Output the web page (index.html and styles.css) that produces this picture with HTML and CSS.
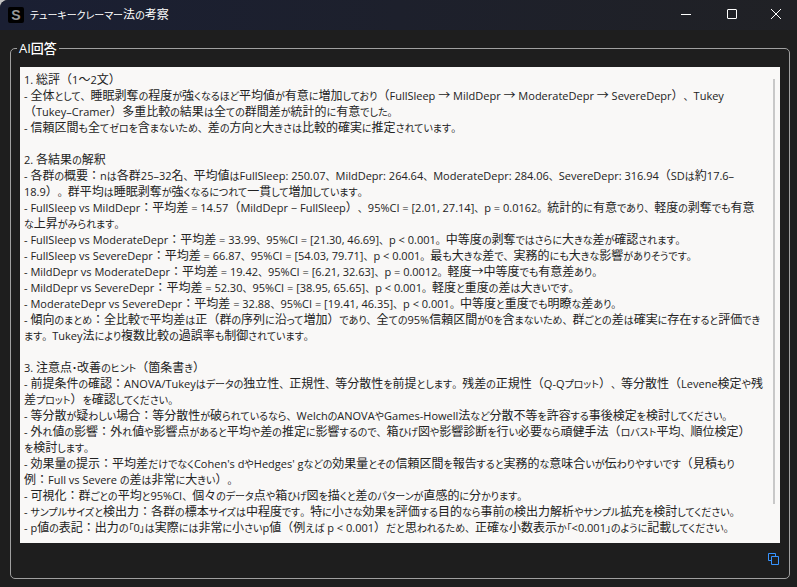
FILE: index.html
```html
<!DOCTYPE html>
<html lang="ja">
<head>
<meta charset="utf-8">
<title>テューキークレーマー法の考察</title>
<link rel="stylesheet" href="styles.css">
<script src="typeset.js" defer></script>
</head>
<body>
<header class="titlebar">
  <span class="app-icon">S</span>
  <h1 class="title" data-typeset>テューキークレーマー法の考察</h1>
  <button class="win-btn" type="button" aria-label="最小化"><svg width="12" height="12" viewBox="0 0 12 12"><path d="M1 6.5h10"/></svg></button>
  <button class="win-btn" type="button" aria-label="最大化"><svg width="12" height="12" viewBox="0 0 12 12"><rect x="1.5" y="1.5" width="9" height="9" rx="0.5"/></svg></button>
  <button class="win-btn" type="button" aria-label="閉じる"><svg width="12" height="12" viewBox="0 0 12 12"><path d="M1 1l10 10M11 1L1 11"/></svg></button>
</header>
<main class="content">
  <fieldset class="group">
    <legend class="group-title"><label for="answer">AI回答</label></legend>
    <div class="answer-box">
      <output class="answer" id="answer" data-typeset>1. 総評（1～2文）
- 全体として、睡眠剥奪の程度が強くなるほど平均値が有意に増加しており（FullSleep → MildDepr → ModerateDepr → SevereDepr）、Tukey
（Tukey–Cramer）多重比較の結果は全ての群間差が統計的に有意でした。
- 信頼区間も全てゼロを含まないため、差の方向と大きさは比較的確実に推定されています。

2. 各結果の解釈
- 各群の概要：nは各群25–32名、平均値はFullSleep: 250.07、MildDepr: 264.64、ModerateDepr: 284.06、SevereDepr: 316.94（SDは約17.6–
18.9）。群平均は睡眠剥奪が強くなるにつれて一貫して増加しています。
- FullSleep vs MildDepr：平均差 = 14.57（MildDepr − FullSleep）、95%CI = [2.01, 27.14]、p = 0.0162。統計的に有意であり、軽度の剥奪でも有意
な上昇がみられます。
- FullSleep vs ModerateDepr：平均差 = 33.99、95%CI = [21.30, 46.69]、p &lt; 0.001。中等度の剥奪ではさらに大きな差が確認されます。
- FullSleep vs SevereDepr：平均差 = 66.87、95%CI = [54.03, 79.71]、p &lt; 0.001。最も大きな差で、実務的にも大きな影響がありそうです。
- MildDepr vs ModerateDepr：平均差 = 19.42、95%CI = [6.21, 32.63]、p = 0.0012。軽度→中等度でも有意差あり。
- MildDepr vs SevereDepr：平均差 = 52.30、95%CI = [38.95, 65.65]、p &lt; 0.001。軽度と重度の差は大きいです。
- ModerateDepr vs SevereDepr：平均差 = 32.88、95%CI = [19.41, 46.35]、p &lt; 0.001。中等度と重度でも明瞭な差あり。
- 傾向のまとめ：全比較で平均差は正（群の序列に沿って増加）であり、全ての95%信頼区間が0を含まないため、群ごとの差は確実に存在すると評価でき
ます。Tukey法により複数比較の過誤率も制御されています。

3. 注意点・改善のヒント（箇条書き）
- 前提条件の確認：ANOVA/Tukeyはデータの独立性、正規性、等分散性を前提とします。残差の正規性（Q-Qプロット）、等分散性（Levene検定や残
差プロット）を確認してください。
- 等分散が疑わしい場合：等分散性が破られているなら、WelchのANOVAやGames-Howell法など分散不等を許容する事後検定を検討してください。
- 外れ値の影響：外れ値や影響点があると平均や差の推定に影響するので、箱ひげ図や影響診断を行い必要なら頑健手法（ロバスト平均、順位検定）
を検討します。
- 効果量の提示：平均差だけでなくCohen's dやHedges' gなどの効果量とその信頼区間を報告すると実務的な意味合いが伝わりやすいです（見積もり
例：Full vs Severe の差は非常に大きい）。
- 可視化：群ごとの平均と95%CI、個々のデータ点や箱ひげ図を描くと差のパターンが直感的に分かります。
- サンプルサイズと検出力：各群の標本サイズは中程度です。特に小さな効果を評価する目的なら事前の検出力解析やサンプル拡充を検討してください。
- p値の表記：出力の「0」は実際には非常に小さいp値（例えば p &lt; 0.001）だと思われるため、正確な小数表示か「&lt;0.001」のように記載してください。</output>
      <span class="scroll-thumb"></span>
    </div>
    <div class="actions">
      <button class="copy-btn" type="button" aria-label="コピー"><svg width="11" height="12" viewBox="0 0 11 12"><path d="M3 7.5H.5V.5h7V3M3.5 3.5h7v8h-7z"/></svg></button>
    </div>
  </fieldset>
</main>
</body>
</html>
```
FILE: typeset.js
```js
// Splits mixed Japanese text into runs so each script gets its own size.
const RUNS = [
  ["wide", "[（）：～→]+"],
  ["stop", "[、。]+"],
  ["kana", "[・「」\\u3041-\\u30fa\\u30fc]+"],
  ["latin", "[\\u0020-\\u007e–−]+"],
];
const pattern = new RegExp(RUNS.map(([, p]) => `(${p})`).join("|"), "g");

for (const el of document.querySelectorAll("[data-typeset]")) {
  const text = el.textContent;
  const out = document.createDocumentFragment();
  let last = 0;
  for (const m of text.matchAll(pattern)) {
    out.append(text.slice(last, m.index));
    const span = document.createElement("span");
    span.className = RUNS[m.slice(1).findIndex((g) => g !== undefined)][0];
    span.textContent = m[0];
    out.append(span);
    last = m.index + m[0].length;
  }
  out.append(text.slice(last));
  el.replaceChildren(out);
}
```
FILE: styles.css
```css
* {
  box-sizing: border-box;
}

html {
  background: #c4c4c4;
}

body {
  margin: 0;
  min-height: 100vh;
  display: flex;
  flex-direction: column;
  border-top-left-radius: 8px;
  overflow: hidden;
  background: #1e1e1e;
  color: #fff;
  font-family: "Open Sans", "Noto Sans CJK JP", sans-serif;
  font-size: 12px;
  text-spacing-trim: space-all;
}

.kana,
.stop,
.latin,
.wide {
  line-height: 10px;
}

.kana,
.stop {
  font-size: 10px;
}

.kana {
  font-feature-settings: "palt";
}

.latin {
  font-size: 11px;
}

.wide {
  font-family: "Noto Sans CJK JP", sans-serif;
}

.titlebar {
  display: flex;
  align-items: center;
  height: 30px;
  padding-left: 8px;
  background: linear-gradient(90deg, #1a1f33, #202125);
}

.app-icon {
  width: 16px;
  height: 16px;
  border-radius: 2px;
  background: #000;
  color: #999;
  font: bold 14px/16px "Liberation Sans", sans-serif;
  text-align: center;
}

.title {
  flex: 1;
  margin: 0 0 0 6px;
  font-size: 12px;
  line-height: 16px;
  font-weight: 400;
}

.win-btn {
  display: flex;
  align-items: center;
  justify-content: center;
  width: 46px;
  height: 30px;
  padding: 0 0 2px;
  border: 0;
  background: none;
}

.win-btn:last-child {
  width: 42px;
}

svg {
  fill: none;
  stroke: #fff;
}

.content {
  flex: 1;
  display: flex;
  padding: 9px 7px 8px 10px;
}

.group {
  flex: 1;
  min-width: 0;
  display: flex;
  flex-direction: column;
  margin: 0;
  padding: 10px 9px 13px;
  border: 1px solid #a0a0a0;
  border-radius: 5px;
}

.group-title {
  height: 18px;
  padding: 0 2px;
  margin-left: -3px;
  font-size: 13px;
  line-height: 18px;
  font-weight: 500;
}

.answer-box {
  position: relative;
  flex: 1;
  display: flex;
}

.answer {
  flex: 1;
  min-width: 0;
  padding: 5px 4px 2px;
  overflow: hidden;
  background: #f9f8f7;
  color: #222;
  line-height: 16px;
  white-space: pre;
}

.scroll-thumb {
  position: absolute;
  top: 12px;
  right: 5px;
  bottom: 39px;
  width: 2px;
  background: #c8c8c8;
}

.actions {
  display: flex;
  justify-content: flex-end;
  padding: 10px 1px 0;
}

.copy-btn {
  display: flex;
  padding: 0;
  border: 0;
  background: none;
}

.copy-btn svg {
  stroke: #3794ff;
}
```
